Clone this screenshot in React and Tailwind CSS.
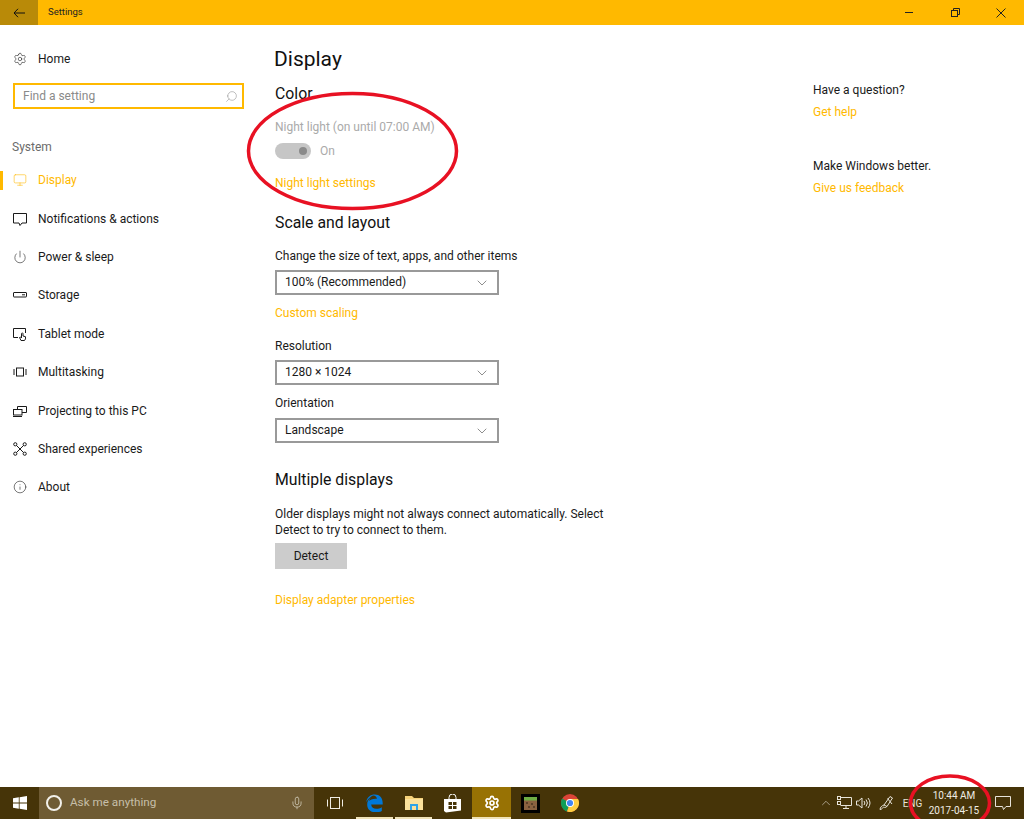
import { ChevronDown, ChevronUp, Settings, Search, Monitor, Power, Info, Mic } from 'lucide-react'

const ink = '#1a1a1a'

function BubbleIcon() {
  return (
    <svg width="14" height="14" viewBox="0 0 14 14" fill="none" stroke="currentColor">
      <path d="M.5 1.500h13v9.500H9l-2 2.500-1-2.500H.5z" />
    </svg>
  )
}
function StorageIcon() {
  return (
    <svg width="14" height="14" viewBox="0 0 14 14" fill="none" stroke="currentColor">
      <rect x="0.500" y="4.500" width="13" height="4.500" rx="0.500" />
      <path d="M9 6.800h3" />
    </svg>
  )
}
function TabletIcon() {
  return (
    <svg width="14" height="14" viewBox="0 0 14 14" fill="none" stroke="currentColor">
      <path d="M5 10.500H0.500v-9h12V6" />
      <path d="M8 13.500 6.500 10.500l1-.5 1 1V6.500a.8.8 0 0 1 1.500 0V9l2.500.7v2.200l-1 1.600z" fill="#fff" />
    </svg>
  )
}
function MultiIcon() {
  return (
    <svg width="14" height="14" viewBox="0 0 14 14" fill="none" stroke="currentColor">
      <rect x="3.500" y="3" width="7" height="8" />
      <path d="M1 4v6M13 4v6" />
    </svg>
  )
}
function ProjectIcon() {
  return (
    <svg width="14" height="14" viewBox="0 0 14 14" fill="none" stroke="currentColor">
      <path d="M4.500 5V2.500h9v6H9" />
      <rect x="0.500" y="5.500" width="8.500" height="5.500" />
      <path d="M0 12.500h9" />
    </svg>
  )
}
function SharedIcon() {
  return (
    <svg width="14" height="14" viewBox="0 0 14 14" fill="none" stroke="currentColor">
      <path d="M3 3l8 8M11 3l-8 8" />
      <circle cx="2.300" cy="2.300" r="1.600" fill="#fff" />
      <circle cx="11.700" cy="2.300" r="1.600" fill="#fff" />
      <circle cx="2.300" cy="11.700" r="1.600" fill="#fff" />
      <circle cx="11.700" cy="11.700" r="1.600" fill="#fff" />
    </svg>
  )
}

function NavItem({ icon, label, active }) {
  return (
    <div className={`relative flex h-[38.4px] items-center pl-[13px] ${active ? 'text-[#ffb900]' : 'text-[#1a1a1a]'}`}>
      {active && <div className="absolute left-0 top-[10px] h-[19px] w-[3px] bg-[#ffb900]" />}
      <span className="flex w-[25px] items-center">{icon}</span>
      <span className="text-[12px]">{label}</span>
    </div>
  )
}

function Dropdown({ value, className }) {
  return (
    <div className={`flex w-[224px] items-center justify-between border-2 border-[#999999] pl-2 pr-[7px] text-[12px] text-[#1a1a1a] ${className}`}>
      <span className="pb-px">{value}</span>
      <ChevronDown size={16} strokeWidth={1} className="text-[#555555]" />
    </div>
  )
}

function Link({ children, className }) {
  return <div className={`h-[18px] text-[12px] leading-[18px] text-[#ffb900] ${className}`}>{children}</div>
}

function Label({ children, className }) {
  return <div className={`h-[18px] text-[12px] leading-[18px] text-[#1a1a1a] ${className}`}>{children}</div>
}

function Heading({ children, className }) {
  return <div className={`h-[20px] text-[15.8px] leading-[20px] text-[#111111] ${className}`}>{children}</div>
}

function TaskButton({ children, className }) {
  return <div className={`flex h-full w-[39px] items-center justify-center ${className}`}>{children}</div>
}

function WindowsLogo() {
  return (
    <svg width="14" height="14" viewBox="0 0 14 14" fill="#ffffff">
      <path d="M0 2.200 5.800 1.300v5.300H0zM6.600 1.200 14 0v6.600H6.600zM0 7.400h5.800v5.300L0 11.800zM6.600 7.400H14V14l-7.400-1.200z" />
    </svg>
  )
}

function EdgeLogo() {
  return (
    <svg width="17" height="18" viewBox="0 0 17 18">
      <path d="M.3 8C1 3 4.500.5 8.800.5c4.700 0 7.900 3.200 7.900 8.700v1.400H5.200c.2 2.900 2.400 4.200 5 4.200 2.100 0 4-.6 5.600-1.600v3.700c-1.600.9-3.700 1.400-6.100 1.400-5 0-8.500-3-8.500-7.900 0-2.700 1.200-5 3.500-6.300-1 .9-1.500 2-1.700 3 1-.8 3.800-2.600 7.800-2.200 0-2-1.300-3.400-3.800-3.400C5.500 2 2.300 4.500.3 8z" fill="#0078d7" />
    </svg>
  )
}

function FolderLogo() {
  return (
    <svg width="18" height="16" viewBox="0 0 18 16">
      <path d="M0 1h7l2 2h9v12H0z" fill="#f5d27a" />
      <rect x="0" y="4" width="18" height="11" fill="#fbe29c" />
      <rect x="5" y="9" width="8" height="6" fill="#2fa4e7" />
      <rect x="7" y="11" width="4" height="4" fill="#fbe29c" />
    </svg>
  )
}

function StoreLogo() {
  return (
    <svg width="17" height="19" viewBox="0 0 17 19">
      <path d="M5 5V3.500a3.500 3.500 0 0 1 7 0V5" fill="none" stroke="#ffffff" />
      <path d="M0 5h17v11.500L2 18.500 0 17z" fill="#ffffff" />
      <path d="M4.500 8h3.500v3H4.500zM9 8h3.500v3H9zM4.500 12h3.500v3H4.500zM9 12h3.500v3H9z" fill="#463408" />
    </svg>
  )
}

function BlockLogo() {
  return (
    <svg width="19" height="19" viewBox="0 0 19 19">
      <rect width="19" height="19" fill="#000000" />
      <rect x="3" y="3" width="13" height="13" fill="#8a6240" />
      <rect x="3" y="3" width="13" height="3.500" fill="#6fae45" />
      <path d="M5 8h2v2H5zM10 9h2v2h-2zM7 12h2v2H7zM12 12h2v2h-2z" fill="#5c4029" />
    </svg>
  )
}

function ChromeLogo() {
  return (
    <svg width="18" height="18" viewBox="0 0 18 18">
      <circle cx="9" cy="9" r="9" fill="#db4437" />
      <path d="M9 9 1.200 4.500A9 9 0 0 0 6 17.500z" fill="#0f9d58" />
      <path d="M9 5h8a9 9 0 0 1-11 12.500L9 9z" fill="#ffcd40" />
      <circle cx="9" cy="9" r="4" fill="#ffffff" />
      <circle cx="9" cy="9" r="3.100" fill="#4285f4" />
    </svg>
  )
}

function NetworkIcon() {
  return (
    <svg width="15" height="14" viewBox="0 0 15 14" fill="none" stroke="#e8e4da">
      <path d="M4 1.500h10.500v8H3.500" />
      <path d="M9 9.500v3M6 12.500h6" />
      <rect x="0.500" y="0.500" width="3" height="3" />
      <rect x="0.500" y="5.500" width="3" height="3" />
    </svg>
  )
}

function VolumeIcon() {
  return (
    <svg width="15" height="14" viewBox="0 0 15 14" fill="none" stroke="#e8e4da">
      <path d="M0.500 5v4h2l3.500 3V2L2.500 5z" />
      <path d="M8 5a3 3 0 0 1 0 4M10 3.500a5.500 5.500 0 0 1 0 7M12 2a8 8 0 0 1 0 10" />
    </svg>
  )
}

function PenIcon() {
  return (
    <svg width="15" height="16" viewBox="0 0 15 16" fill="none" stroke="#e8e4da">
      <path d="M5 10 11 1.500l2.500 1.500L8 11.500z" />
      <path d="M5 10c-2 .5-4 2.500-4 4.500 2 0 3-2 3.500-2.500s1 1 2 .5 1.500-1.500 1.500-1" />
      <path d="M8.500 3.500 13 9" />
    </svg>
  )
}

export default function App() {
  return (
    <div
      className="relative flex h-[819px] w-[1024px] flex-col overflow-hidden bg-white"
      style={{ fontFamily: 'Roboto, sans-serif', color: ink }}
    >
      {/* Title bar */}
      <div className="flex h-[25px] shrink-0 items-center bg-[#ffb900]">
        <div className="flex h-full w-[38px] items-center justify-center bg-[#b98a08]">
          <svg width="12" height="10" viewBox="0 0 12 10" fill="none" stroke="#111111">
            <path d="M12 5H1M5 .8 1 5l4 4.200" />
          </svg>
        </div>
        <span className="ml-[10px] text-[9.5px] text-[#222222]">Settings</span>
        <div className="ml-auto flex items-center">
          <div className="flex w-[46px] justify-center">
            <div className="h-px w-[8px] bg-[#222222]" />
          </div>
          <div className="flex w-[46px] justify-center">
            <svg width="9" height="9" viewBox="0 0 9 9" fill="none" stroke="#222222">
              <rect x="0.500" y="2.500" width="6" height="6" />
              <path d="M2.500 2.500v-2h6v6h-2" />
            </svg>
          </div>
          <div className="flex w-[46px] justify-center">
            <svg width="10" height="10" viewBox="0 0 10 10" fill="none" stroke="#222222">
              <path d="M.5.5l9 9M9.500.5l-9 9" />
            </svg>
          </div>
        </div>
      </div>

      {/* Body */}
      <div className="flex flex-1">
        <aside className="w-[275px] shrink-0">
          <div className="mt-[15px] flex h-[38px] items-center pl-[13px] text-[#1a1a1a]">
            <span className="flex w-[25px] items-center"><Settings size={14} strokeWidth={1} /></span>
            <span className="text-[12px]">Home</span>
          </div>
          <div className="ml-[13px] mt-[5px] flex h-[26px] w-[231px] items-center justify-between border-2 border-[#ffb900] pl-2 pr-[4px]">
            <span className="text-[12px] text-[#8a8a8a]">Find a setting</span>
            <Search size={13} strokeWidth={1} className="-scale-x-100 text-[#8a8a8a]" />
          </div>
          <div className="ml-[12px] mt-[29px] h-[18px] text-[12px] leading-[18px] text-[#6b6b6b]">System</div>
          <div className="mt-[5px]">
            <NavItem active label="Display" icon={<Monitor size={14} strokeWidth={1} />} />
            <NavItem label="Notifications & actions" icon={<BubbleIcon />} />
            <NavItem label="Power & sleep" icon={<Power size={14} strokeWidth={1} />} />
            <NavItem label="Storage" icon={<StorageIcon />} />
            <NavItem label="Tablet mode" icon={<TabletIcon />} />
            <NavItem label="Multitasking" icon={<MultiIcon />} />
            <NavItem label="Projecting to this PC" icon={<ProjectIcon />} />
            <NavItem label="Shared experiences" icon={<SharedIcon />} />
            <NavItem label="About" icon={<Info size={14} strokeWidth={1} />} />
          </div>
        </aside>

        <main className="w-[538px] shrink-0">
          <div className="-ml-[1px] mt-[19px] h-[30px] text-[21px] leading-[30px] text-[#111111]">Display</div>
          <Heading className="mt-[10px]">Color</Heading>
          <div className="mt-[14px] h-[18px] text-[12px] leading-[18px] text-[#aaaaaa]">Night light (on until 07:00 AM)</div>
          <div className="mt-[5px] flex h-[20px] items-center">
            <div className="flex h-[16px] w-[36px] items-center justify-end rounded-full bg-[#c6c6c6] pr-[4px]">
              <div className="h-[8px] w-[8px] rounded-full bg-[#8a8a8a]" />
            </div>
            <span className="ml-[9px] text-[12px] text-[#aaaaaa]">On</span>
          </div>
          <Link className="mt-[13px]">Night light settings</Link>
          <Heading className="mt-[21px]">Scale and layout</Heading>
          <Label className="mt-[14px]">Change the size of text, apps, and other items</Label>
          <Dropdown className="mt-[5px] h-[25px]" value="100% (Recommended)" />
          <Link className="mt-[9px]">Custom scaling</Link>
          <Label className="mt-[15px]">Resolution</Label>
          <Dropdown className="mt-[5px] h-[25px]" value="1280 × 1024" />
          <Label className="mt-[9px]">Orientation</Label>
          <Dropdown className="mt-[6px] h-[25px]" value="Landscape" />
          <Heading className="mt-[27px]">Multiple displays</Heading>
          <div className="mt-[16px] w-[340px] text-[12px] leading-[16px] text-[#1a1a1a]">
            Older displays might not always connect automatically. Select Detect to try to connect to them.
          </div>
          <div className="mt-[5px] flex h-[26px] w-[72px] items-center justify-center bg-[#cccccc] text-[12px] text-[#1a1a1a]">Detect</div>
          <Link className="mt-[22px]">Display adapter properties</Link>
        </main>

        <div className="flex-1">
          <Label className="mt-[56px]">Have a question?</Label>
          <Link className="mt-[4px]">Get help</Link>
          <Label className="mt-[36px]">Make Windows better.</Label>
          <Link className="mt-[4px]">Give us feedback</Link>
        </div>
      </div>

      {/* Taskbar */}
      <div className="flex h-[32px] shrink-0 items-center bg-[#463408]">
        <div className="flex h-full w-[39px] items-center justify-center"><WindowsLogo /></div>
        <div className="flex h-full w-[275px] items-center bg-[#6f5b33] pl-[7px]">
          <div className="h-[16px] w-[16px] rounded-full border-2 border-[#f2f0ea]" />
          <span className="ml-[8px] text-[11.7px] text-[#c6bfa9]">Ask me anything</span>
          <Mic size={14} strokeWidth={1.5} className="ml-auto mr-[10px] text-[#c6bfa9]" />
        </div>
        <div className="flex h-full w-[41px] items-center justify-center">
          <svg width="16" height="12" viewBox="0 0 16 12" fill="none" stroke="#f0ede4">
            <rect x="3.500" y="0.500" width="9" height="11" />
            <path d="M.5 2.500v7M15.500 2.500v7" />
          </svg>
        </div>
        <TaskButton className="relative"><EdgeLogo /><div className="absolute bottom-0 left-[1px] right-[1px] h-[2px] bg-[#f0e3b8]" /></TaskButton>
        <TaskButton className="relative"><FolderLogo /><div className="absolute bottom-0 left-[1px] right-[1px] h-[2px] bg-[#f0e3b8]" /></TaskButton>
        <TaskButton><StoreLogo /></TaskButton>
        <TaskButton className="relative bg-[#987204]">
          <Settings size={16} strokeWidth={2.5} className="text-white" />
          <div className="absolute bottom-0 left-0 right-0 h-[2px] bg-[#f0e3b8]" />
        </TaskButton>
        <TaskButton><BlockLogo /></TaskButton>
        <TaskButton><ChromeLogo /></TaskButton>

        <div className="ml-auto flex h-full items-center text-[#e8e4da]">
          <div className="flex w-[19px] justify-center"><ChevronUp size={14} strokeWidth={1} /></div>
          <div className="flex w-[19px] justify-center"><NetworkIcon /></div>
          <div className="flex w-[19px] justify-center"><VolumeIcon /></div>
          <div className="flex w-[26px] justify-center"><PenIcon /></div>
          <div className="w-[27px] text-center text-[10px]">ENG</div>
          <div className="w-[56px] text-center text-[10px] leading-[15px] text-[#efece3]">
            <div>10:44 AM</div>
            <div>2017-04-15</div>
          </div>
          <div className="flex w-[42px] justify-center">
            <svg width="16" height="14" viewBox="0 0 16 14" fill="none" stroke="#e8e4da">
              <path d="M.5.5h15v10H11l-2.500 3-1-3H.5z" />
            </svg>
          </div>
        </div>
      </div>

      {/* Hand-drawn annotations over the screenshot */}
      <svg className="pointer-events-none absolute left-0 top-0" width="1024" height="819" fill="none" stroke="#e81123" strokeWidth="3.5">
        <ellipse cx="352.500" cy="151" rx="104" ry="57.500" />
        <ellipse cx="950" cy="803" rx="39.500" ry="27" />
      </svg>
    </div>
  )
}
